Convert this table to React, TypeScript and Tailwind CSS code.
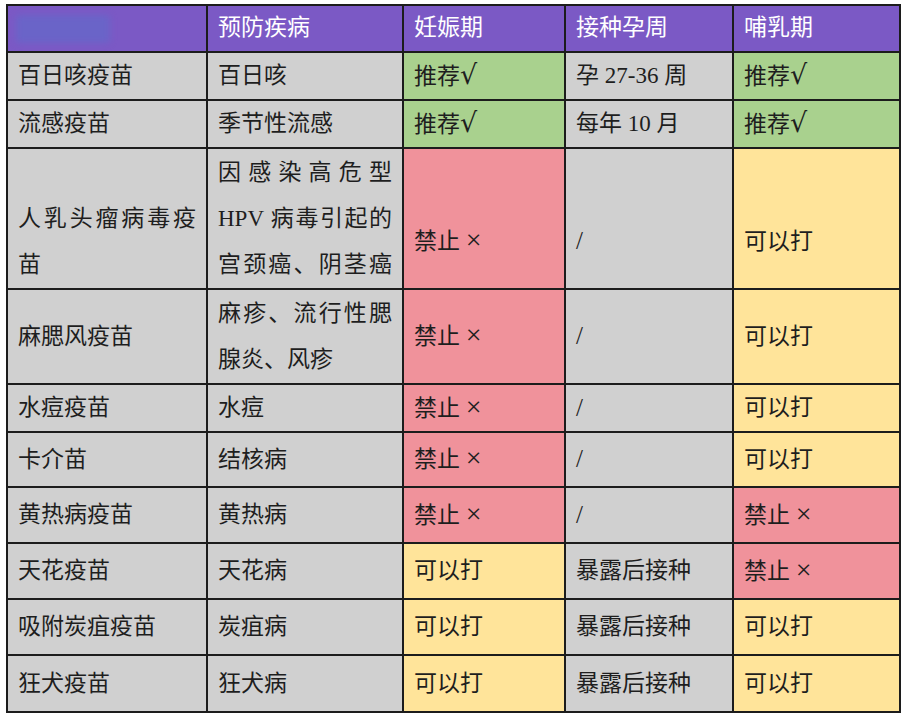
type Cell = {
  lines: string[];
  bg: string;
  justify?: boolean;
  align?: "center" | "end" | "low";
};

const GRAY = "bg-[#d0d0d0]";
const GREEN = "bg-[#a9d18e]";
const PINK = "bg-[#f0929b]";
const YELLOW = "bg-[#ffe49a]";

const rows: { h: string; cells: Cell[] }[] = [
  {
    h: "h-[46px]",
    cells: [
      { lines: ["百日咳疫苗"], bg: GRAY },
      { lines: ["百日咳"], bg: GRAY },
      { lines: ["推荐√"], bg: GREEN },
      { lines: ["孕 27-36 周"], bg: GRAY },
      { lines: ["推荐√"], bg: GREEN },
    ],
  },
  {
    h: "h-[46px]",
    cells: [
      { lines: ["流感疫苗"], bg: GRAY },
      { lines: ["季节性流感"], bg: GRAY },
      { lines: ["推荐√"], bg: GREEN },
      { lines: ["每年 10 月"], bg: GRAY },
      { lines: ["推荐√"], bg: GREEN },
    ],
  },
  {
    h: "h-[139px]",
    cells: [
      { lines: ["人乳头瘤病毒疫", "苗"], bg: GRAY, justify: true, align: "end" },
      { lines: ["因感染高危型", "HPV 病毒引起的", "宫颈癌、阴茎癌"], bg: GRAY, justify: true },
      { lines: ["禁止 ×"], bg: PINK, align: "low" },
      { lines: ["/"], bg: GRAY, align: "low" },
      { lines: ["可以打"], bg: YELLOW, align: "low" },
    ],
  },
  {
    h: "h-[93px]",
    cells: [
      { lines: ["麻腮风疫苗"], bg: GRAY },
      { lines: ["麻疹、流行性腮", "腺炎、风疹"], bg: GRAY, justify: true },
      { lines: ["禁止 ×"], bg: PINK },
      { lines: ["/"], bg: GRAY },
      { lines: ["可以打"], bg: YELLOW },
    ],
  },
  {
    h: "h-[46px]",
    cells: [
      { lines: ["水痘疫苗"], bg: GRAY },
      { lines: ["水痘"], bg: GRAY },
      { lines: ["禁止 ×"], bg: PINK },
      { lines: ["/"], bg: GRAY },
      { lines: ["可以打"], bg: YELLOW },
    ],
  },
  {
    h: "h-[53px]",
    cells: [
      { lines: ["卡介苗"], bg: GRAY },
      { lines: ["结核病"], bg: GRAY },
      { lines: ["禁止 ×"], bg: PINK },
      { lines: ["/"], bg: GRAY },
      { lines: ["可以打"], bg: YELLOW },
    ],
  },
  {
    h: "h-[54px]",
    cells: [
      { lines: ["黄热病疫苗"], bg: GRAY },
      { lines: ["黄热病"], bg: GRAY },
      { lines: ["禁止 ×"], bg: PINK },
      { lines: ["/"], bg: GRAY },
      { lines: ["禁止 ×"], bg: PINK },
    ],
  },
  {
    h: "h-[54px]",
    cells: [
      { lines: ["天花疫苗"], bg: GRAY },
      { lines: ["天花病"], bg: GRAY },
      { lines: ["可以打"], bg: YELLOW },
      { lines: ["暴露后接种"], bg: GRAY },
      { lines: ["禁止 ×"], bg: PINK },
    ],
  },
  {
    h: "h-[54px]",
    cells: [
      { lines: ["吸附炭疽疫苗"], bg: GRAY },
      { lines: ["炭疽病"], bg: GRAY },
      { lines: ["可以打"], bg: YELLOW },
      { lines: ["暴露后接种"], bg: GRAY },
      { lines: ["可以打"], bg: YELLOW },
    ],
  },
  {
    h: "h-[55px]",
    cells: [
      { lines: ["狂犬疫苗"], bg: GRAY },
      { lines: ["狂犬病"], bg: GRAY },
      { lines: ["可以打"], bg: YELLOW },
      { lines: ["暴露后接种"], bg: GRAY },
      { lines: ["可以打"], bg: YELLOW },
    ],
  },
];

const headers = ["预防疾病", "妊娠期", "接种孕周", "哺乳期"];

// the check and cross marks are drawn bigger than the body font gives them
function Line({ text }: { text: string }) {
  if (text.endsWith("√")) {
    return (
      <>
        {text.slice(0, -1)}
        <span className="text-[27px] leading-none" style={{ fontFamily: '"DejaVu Serif", serif' }}>
          √
        </span>
      </>
    );
  }
  if (text.endsWith("×")) {
    return (
      <>
        {text.slice(0, -1)}
        <span className="text-[28px] leading-none">×</span>
      </>
    );
  }
  if (text === "/") return <span className="text-[25px]">/</span>;
  return <>{text}</>;
}

function TableCell({ cell, h }: { cell: Cell; h: string }) {
  let pos = "justify-center";
  if (cell.align === "end") pos = "justify-end";
  if (cell.align === "low") pos = "justify-center pt-[46px]";
  return (
    <div className={`${cell.bg} ${h} flex flex-col ${pos} px-[10px] overflow-hidden`}>
      {cell.lines.map((line, i) => (
        <div
          key={i}
          className={`${cell.lines.length > 1 ? "leading-[46px]" : "leading-[30px]"} ${
            cell.justify && (i < cell.lines.length - 1 || cell.lines.length === 3)
              ? "text-justify [text-align-last:justify]"
              : ""
          } whitespace-nowrap`}
        >
          <Line text={line} />
        </div>
      ))}
    </div>
  );
}

export default function App() {
  return (
    <div className="w-[908px] h-[713px] bg-white pt-[4px] pl-[6px] overflow-hidden">
      <div
        className="w-[895px] grid grid-cols-[198px_194px_160px_166px_165px] gap-[2px] p-[2px] bg-[#1c1c1c] text-[23px] text-[#1e1e1e]"
        style={{ fontFamily: '"Liberation Serif", "Noto Sans CJK SC", serif' }}
      >
        <div className="h-[45px] bg-[#7b59c5] flex items-center pl-[8px]">
          <div className="w-[94px] h-[28px] bg-[#6a64c8] blur-[3px] rounded-sm" />
        </div>
        {headers.map((t) => (
          <div key={t} className="h-[45px] bg-[#7b59c5] flex items-center px-[10px] text-white">
            {t}
          </div>
        ))}
        {rows.map((row, r) =>
          row.cells.map((cell, c) => <TableCell key={`${r}-${c}`} cell={cell} h={row.h} />)
        )}
      </div>
    </div>
  );
}
